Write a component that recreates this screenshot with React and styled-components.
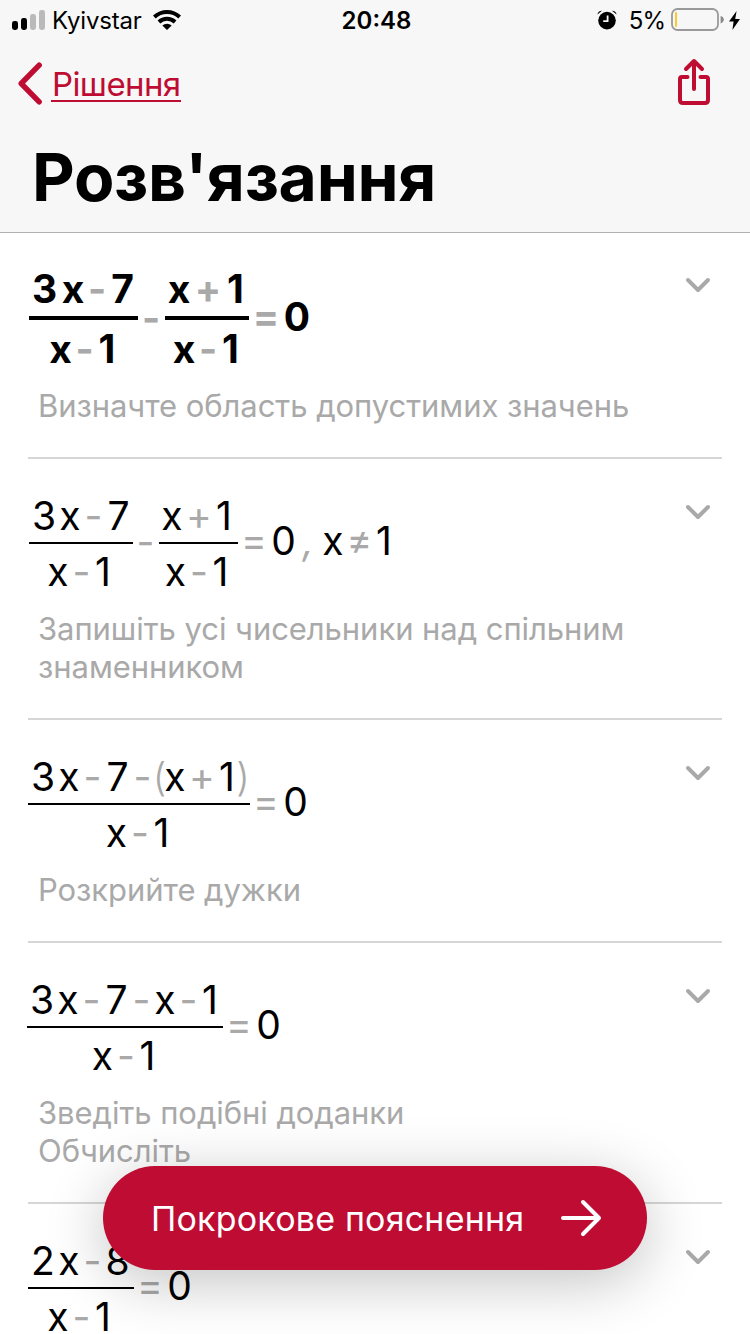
import React from 'react'
import styled, { createGlobalStyle } from 'styled-components'

const RED = '#be0c32'
const GREY = '#a9a9a9'

// cell width and right inset of each symbol: [width, inset]
const regular = {
    '-': [25, 0],
    '+': [32, 0],
    '=': [32, 0],
    '≠': [31, 0],
    ',': [24, 4],
    '(': [9, 0],
    ')': [10, 2],
    x: [22, 0],
    0: [28, 1],
    1: [21, 3],
    2: [28, 2],
    3: [28, 2],
    7: [25, 0],
    8: [27, 2]
}

const bold = {
    ...regular,
    '-': [24, 0],
    '+': [34, 0],
    '=': [34, 0],
    x: [24, 0],
    0: [28, 0],
    1: [22, 1],
    3: [30, 3],
    7: [27, 0]
}

const steps = [
    {
        strong: true,
        indent: 1,
        gap: 2,
        terms: [{ top: '3x-7', bottom: 'x-1' }, '-', { top: 'x+1', bottom: 'x-1' }, '=0'],
        notes: ['Визначте область допустимих значень']
    },
    {
        indent: 1,
        gap: 2,
        terms: [{ top: '3x-7', bottom: 'x-1' }, '-', { top: 'x+1', bottom: 'x-1' }, '=0,x≠1'],
        notes: ['Запишіть усі чисельники над спільним', 'знаменником']
    },
    {
        indent: 0,
        gap: 1,
        terms: [{ top: '3x-7-(x+1)', bottom: 'x-1' }, '=0'],
        notes: ['Розкрийте дужки']
    },
    {
        indent: -1,
        gap: 1,
        terms: [{ top: '3x-7-x-1', bottom: 'x-1' }, '=0'],
        notes: ['Зведіть подібні доданки', 'Обчисліть']
    },
    {
        indent: 0,
        gap: 2,
        terms: [{ top: '2x-8', bottom: 'x-1' }, '=0'],
        notes: []
    }
]

const Symbols = ({ text, strong }) => {
    const table = strong ? bold : regular
    return [...text].map((char, i) => (
        <Cell
            key={i}
            $width={table[char][0]}
            $inset={table[char][1]}
            $grey={'-+=≠,()'.includes(char)}
            $light={'()'.includes(char)}
            $italic={char === ','}
            $raised={'=≠'.includes(char)}
        >
            {char}
        </Cell>
    ))
}

const Step = ({ step }) => {
    const { strong, indent, gap, terms, notes } = step
    return (
        <StepRow $first={strong}>
            <div>
                <Equation $strong={strong} $indent={indent}>
                    {terms.map((term, i) =>
                        typeof term === 'string' ? (
                            <Side key={i} $strong={strong} $minus={term === '-'}>
                                <Symbols text={term} strong={strong} />
                            </Side>
                        ) : (
                            <Fraction key={i}>
                                <Line $gap={gap}><Symbols text={term.top} strong={strong} /></Line>
                                <Bar $strong={strong} />
                                <Line $gap={gap}><Symbols text={term.bottom} strong={strong} /></Line>
                            </Fraction>
                        )
                    )}
                </Equation>
                <Notes>
                    {notes.map((note) => <Note key={note}>{note}</Note>)}
                </Notes>
            </div>
            <Chevron viewBox="0 0 28 18">
                <path d="M4 4 L14 14 L24 4" />
            </Chevron>
        </StepRow>
    )
}

const StatusBar = () => (
    <Status>
        <StatusLeft>
            <svg width="33" height="20" viewBox="0 0 33 20">
                <rect x="0" y="11" width="6" height="9" rx="2.4" />
                <rect x="9" y="8" width="6" height="12" rx="2.4" />
                <rect x="18" y="4" width="6" height="16" rx="2.4" fill="#bababa" />
                <rect x="27" y="0" width="6" height="20" rx="2.4" fill="#bababa" />
            </svg>
            <Carrier>Kyivstar</Carrier>
            <svg width="28" height="20" viewBox="0 0 28 20">
                <path d="M0 5.6 A20.5 20.5 0 0 1 28 5.6 L25.3 8.6 A16.5 16.5 0 0 0 2.7 8.6 Z" />
                <path d="M4.6 10.5 A13.8 13.8 0 0 1 23.4 10.5 L20.7 13.4 A9.8 9.8 0 0 0 7.3 13.4 Z" />
                <path d="M9.3 15.5 A7 7 0 0 1 18.7 15.5 L14 20 Z" />
            </svg>
        </StatusLeft>
        <Clock>20:48</Clock>
        <StatusRight>
            <svg width="20" height="20" viewBox="0 0 20 20">
                <circle cx="10" cy="10.6" r="8.8" />
                <path d="M0.4 4.6 Q1 1 5 0.8 Z M19.6 4.6 Q19 1 15 0.8 Z" />
                <path d="M10.6 5.4 V11.2 H6.2" stroke="#f7f7f7" strokeWidth="1.8" fill="none" />
            </svg>
            <Percent>5%</Percent>
            <svg width="54" height="24" viewBox="0 0 54 24">
                <rect x="1" y="1" width="46" height="21" rx="5.5" fill="none" stroke="#999" strokeWidth="1.8" />
                <rect x="4" y="4" width="2" height="15" rx="1" fill="#fbcb2e" />
                <path d="M49.6 8 Q52.8 9 52.8 11.6 Q52.8 14.4 49.6 15.4 Z" fill="#888" />
            </svg>
            <Bolt viewBox="0 0 11 19">
                <path d="M7.6 0 L0 10.6 H4.6 L3.4 19 L11 8 H6.2 Z" />
            </Bolt>
        </StatusRight>
    </Status>
)

const App = () => {
    return (
        <Screen>
            <GlobalStyle />
            <Header>
                <StatusBar />
                <Nav>
                    <Back>
                        <svg width="26" height="44" viewBox="0 0 26 44">
                            <path d="M21.2 3.2 L3.2 21.5 L21.2 39.8" fill="none" stroke={RED} strokeWidth="5.4" strokeLinecap="round" strokeLinejoin="round" />
                        </svg>
                        <BackLabel>Рішення</BackLabel>
                    </Back>
                    <svg width="34" height="48" viewBox="0 0 34 48" fill="none" stroke={RED} strokeWidth="4" strokeLinecap="round" strokeLinejoin="round">
                        <path d="M10.5 19 H5 Q3 19 3 21 V42 Q3 45 6 45 H28 Q31 45 31 42 V21 Q31 19 29 19 H23.5" />
                        <path d="M17 31 V3.5 M9 11 L17 3 L25 11" />
                    </svg>
                </Nav>
                <Title>Розв'язання</Title>
            </Header>
            <main>
                {steps.map((step, i) => <Step key={i} step={step} />)}
            </main>
            <ExplainButton>
                <ButtonText>Покрокове пояснення</ButtonText>
                <svg width="42" height="38" viewBox="0 0 42 38" fill="none" stroke="#fff" strokeWidth="4" strokeLinecap="round" strokeLinejoin="round">
                    <path d="M3 19 H39 M23 3 L39 19 L23 35" />
                </svg>
            </ExplainButton>
        </Screen>
    )
}

const GlobalStyle = createGlobalStyle`
* {
    box-sizing: border-box;
}
body {
    margin: 0;
    overflow: hidden;
    background: #fff;
    font-family: Inter, 'Noto Sans', sans-serif;
}
svg {
    display: block;
    flex: none;
}
`

const Screen = styled.div`
position: relative;
width: 750px;
height: 1334px;
overflow: hidden;
background: #fff;
`

const Header = styled.header`
height: 233px;
background: #f7f7f7;
border-bottom: 1px solid #b0b0b0;
`

const Status = styled.div`
display: grid;
grid-template-columns: 1fr auto 1fr;
align-items: center;
height: 40px;
padding: 0 10px 0 12px;
font-size: 24px;
line-height: 38px;
`

const StatusLeft = styled.div`
display: flex;
align-items: center;
`

const StatusRight = styled.div`
display: flex;
align-items: center;
justify-content: flex-end;
`

const Carrier = styled.span`
width: 100px;
padding: 2px 0 0 7px;
margin-right: 8px;
letter-spacing: -0.2px;
white-space: nowrap;
`

const Clock = styled.span`
padding: 2px 0 0 1px;
font-weight: 600;
`

const Percent = styled.span`
padding-top: 2px;
margin: 0 6px 0 12px;
letter-spacing: -1px;
`

const Bolt = styled.svg`
width: 11px;
height: 19px;
margin-left: 4px;
`

const Nav = styled.nav`
display: flex;
justify-content: space-between;
align-items: center;
height: 88px;
padding: 0 39px 4px 18px;
`

const Back = styled.a`
display: flex;
align-items: center;
gap: 7px;
padding-top: 4px;
color: ${RED};
`

const BackLabel = styled.span`
height: 36px;
padding-left: 1px;
border-bottom: 2px solid ${RED};
font-size: 33px;
letter-spacing: -0.6px;
line-height: 36px;
white-space: nowrap;
`

const Title = styled.h1`
margin: 9px 0 0 32px;
font-size: 66px;
font-weight: 700;
letter-spacing: -0.3px;
line-height: 80px;
white-space: nowrap;
`

const StepRow = styled.section`
display: flex;
justify-content: space-between;
margin: 0 28px;
padding: ${(p) => (p.$first ? 35 : 36)}px 0 32px;
border-bottom: 2px solid #d6d6d6;
`

const Equation = styled.div`
display: flex;
align-items: center;
margin-left: ${(p) => p.$indent}px;
font-size: 39px;
font-weight: ${(p) => (p.$strong ? 700 : 400)};
line-height: 42px;
`

const Fraction = styled.div`
display: flex;
flex-direction: column;
align-items: center;
`

const Line = styled.div`
display: flex;
padding: 0 ${(p) => p.$gap}px 0 2px;
`

const Bar = styled.div`
align-self: stretch;
height: ${(p) => (p.$strong ? 4 : 2)}px;
margin: ${(p) => (p.$strong ? '6px 0 8px' : '5px 0 7px')};
background: #000;
`

const Side = styled.div`
display: flex;
margin-bottom: ${(p) => (p.$strong ? 4 : 6)}px;
${(p) => p.$minus && `padding: 2px ${p.$strong ? 2 : 1}px 0 ${p.$strong ? 1 : 0}px;`}
`

const Cell = styled.span`
display: flex;
justify-content: center;
width: ${(p) => p.$width}px;
padding-right: ${(p) => p.$inset}px;
color: ${(p) => (p.$grey ? GREY : '#000')};
${(p) => p.$light && 'font-weight: 300;'}
${(p) => p.$italic && 'font-style: italic;'}
${(p) => p.$raised && 'margin-top: -1px;'}
`

const Notes = styled.div`
margin-top: 17px;
padding-left: 10px;
`

const Note = styled.p`
margin: 0;
color: ${GREY};
font-size: 31px;
letter-spacing: -0.06px;
line-height: 38px;
white-space: nowrap;
`

const Chevron = styled.svg`
width: 28px;
height: 18px;
margin: 8px 10px 0 0;
fill: none;
stroke: ${GREY};
stroke-width: 4px;
stroke-linecap: round;
stroke-linejoin: round;
`

const ExplainButton = styled.button`
position: absolute;
left: 103px;
bottom: 64px;
display: flex;
align-items: center;
justify-content: space-between;
width: 544px;
height: 104px;
padding: 0 45px 0 48px;
border: none;
border-radius: 52px;
background: ${RED};
box-shadow: 0 12px 60px rgba(0, 0, 0, 0.24);
color: #fff;
font-family: inherit;
`

const ButtonText = styled.span`
font-size: 34px;
letter-spacing: 0.2px;
white-space: nowrap;
`

export default App
